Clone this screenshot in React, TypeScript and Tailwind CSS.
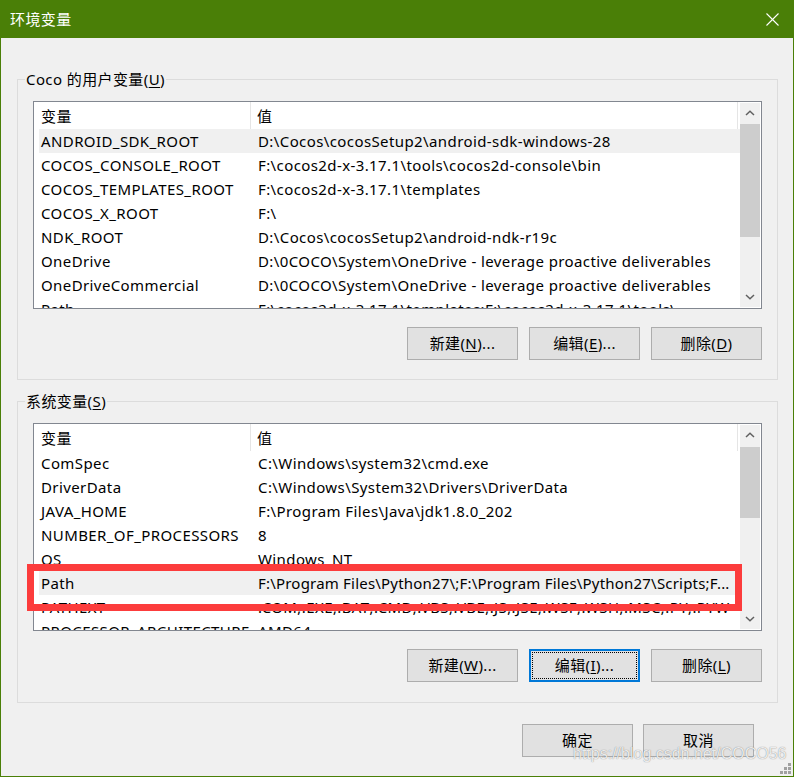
import React from "react";

type Row = [string, string, string?];

const userVars: Row[] = [
  ["ANDROID_SDK_ROOT", "D:\\Cocos\\cocosSetup2\\android-sdk-windows-28"],
  ["COCOS_CONSOLE_ROOT", "F:\\cocos2d-x-3.17.1\\tools\\cocos2d-console\\bin"],
  ["COCOS_TEMPLATES_ROOT", "F:\\cocos2d-x-3.17.1\\templates"],
  ["COCOS_X_ROOT", "F:\\"],
  ["NDK_ROOT", "D:\\Cocos\\cocosSetup2\\android-ndk-r19c"],
  ["OneDrive", "D:\\0COCO\\System\\OneDrive - leverage proactive deliverables"],
  ["OneDriveCommercial", "D:\\0COCO\\System\\OneDrive - leverage proactive deliverables"],
  ["Path", "F:\\cocos2d-x-3.17.1\\templates;F:\\cocos2d-x-3.17.1\\tools\\..."],
];

const sysVars: Row[] = [
  ["ComSpec", "C:\\Windows\\system32\\cmd.exe"],
  ["DriverData", "C:\\Windows\\System32\\Drivers\\DriverData"],
  ["JAVA_HOME", "F:\\Program Files\\Java\\jdk1.8.0_202"],
  ["NUMBER_OF_PROCESSORS", "8"],
  ["OS", "Windows_NT"],
  ["Path", "F:\\Program Files\\Python27\\;F:\\Program Files\\Python27\\Scripts;F...", "tracking-[0.2px]"],
  ["PATHEXT", ".COM;.EXE;.BAT;.CMD;.VBS;.VBE;.JS;.JSE;.WSF;.WSH;.MSC;.PY;.PYW"],
  ["PROCESSOR_ARCHITECTURE", "AMD64"],
];

function ChevronUp() {
  return (
    <svg width="10" height="6" viewBox="0 0 10 6">
      <polyline points="1,5 5,1.3 9,5" fill="none" stroke="#606060" strokeWidth="1.5" />
    </svg>
  );
}

function ChevronDown() {
  return (
    <svg width="10" height="6" viewBox="0 0 10 6">
      <polyline points="1,1 5,4.7 9,1" fill="none" stroke="#606060" strokeWidth="1.5" />
    </svg>
  );
}

function ListBox({ rows, selected, thumbClass }: { rows: Row[]; selected: number; thumbClass: string }) {
  return (
    <div className="h-[208px] border border-[#828790] bg-white flex overflow-hidden">
      <div className="flex-1 pl-[5px] flex flex-col overflow-hidden">
        <div className="h-[27px] flex shrink-0">
          <div className="w-[212px] shrink-0 border-r border-[#e5e5e5] pl-[2px] flex items-center pt-[2px]">变量</div>
          <div className="w-[487px] shrink-0 border-r border-[#e5e5e5] pl-[6px] flex items-center pt-[2px]">值</div>
        </div>
        {rows.map((r, i) => (
          <div
            key={r[0]}
            className={
              "h-[24px] shrink-0 flex items-center whitespace-nowrap " + (i === selected ? "bg-[#f0f0f0]" : "")
            }
          >
            <div className="w-[212px] shrink-0 pl-[2px] overflow-hidden">{r[0]}</div>
            <div className={"flex-1 min-w-0 pl-[7px] overflow-hidden " + (r[2] ?? "")}>{r[1]}</div>
          </div>
        ))}
      </div>
      <div className="w-[20px] shrink-0 my-[1px] mr-[1px] bg-[#f0f0f0] flex flex-col">
        <div className="h-[20px] shrink-0 flex items-center justify-center">
          <ChevronUp />
        </div>
        <div className="flex-1">
          <div className={"bg-[#cdcdcd] " + thumbClass} />
        </div>
        <div className="h-[20px] shrink-0 flex items-center justify-center">
          <ChevronDown />
        </div>
      </div>
    </div>
  );
}

function Btn({ label, mn, tail, focused }: { label: string; mn?: string; tail?: string; focused?: boolean }) {
  return (
    <div
      className={
        "relative w-[111px] h-[33px] shrink-0 bg-[#e1e1e1] flex items-center justify-center " +
        (focused ? "border-2 border-[#0078d7]" : "border border-[#adadad]")
      }
    >
      {focused && <div className="absolute inset-[1px] border border-dotted border-[#000]" />}
      <span className="relative">
        {label}
        {mn !== undefined && (
          <>
            (<span className="underline underline-offset-2">{mn}</span>){tail}
          </>
        )}
      </span>
    </div>
  );
}

function Group({ title, mn, children, pb }: { title: string; mn: string; children: React.ReactNode; pb: string }) {
  return (
    <div className={"relative w-[761px] border border-[#dcdcdc] pl-[15px] pr-[15px] pt-[21px] " + pb}>
      <div className="absolute -top-[11px] left-[7px] px-[1px] leading-[20px] bg-[#f0f0f0] whitespace-nowrap">
        {title}(<span className="underline underline-offset-2">{mn}</span>)
      </div>
      {children}
    </div>
  );
}

export default function App() {
  return (
    <div className="relative w-[794px] h-[777px] flex flex-col bg-[#f0f0f0] text-[15px] tracking-[0.4px] text-black font-['Noto_Sans','Noto_Sans_CJK_SC',sans-serif] overflow-hidden">
      <div className="h-[38px] shrink-0 bg-[#4a7f07] flex items-center justify-between pl-[10px] pr-[15px] text-white">
        <span className="leading-[20px]">环境变量</span>
        <svg width="13" height="13" viewBox="0 0 13 13">
          <line x1="0.5" y1="0.5" x2="12.5" y2="12.5" stroke="#fff" strokeWidth="1.1" />
          <line x1="12.5" y1="0.5" x2="0.5" y2="12.5" stroke="#fff" strokeWidth="1.1" />
        </svg>
      </div>
      <div className="flex-1 border-x border-b border-[#4a7f07] pl-[16px] flex flex-col">
        <div className="mt-[41px]">
          <Group title="Coco 的用户变量" mn="U" pb="pb-[19px]">
            <ListBox rows={userVars} selected={0} thumbClass="mt-[1px] h-[113px]" />
            <div className="mt-[18px] flex justify-end gap-[11px]">
              <Btn label="新建" mn="N" tail="..." />
              <Btn label="编辑" mn="E" tail="..." />
              <Btn label="删除" mn="D" />
            </div>
          </Group>
        </div>
        <div className="mt-[21px]">
          <Group title="系统变量" mn="S" pb="pb-[20px]">
            <ListBox rows={sysVars} selected={5} thumbClass="mt-[2px] h-[71px]" />
            <div className="mt-[18px] flex justify-end gap-[11px]">
              <Btn label="新建" mn="W" tail="..." />
              <Btn label="编辑" mn="I" tail="..." focused />
              <Btn label="删除" mn="L" />
            </div>
          </Group>
        </div>
        <div className="mt-[21px] w-[761px] flex justify-end gap-[10px] pr-[24px]">
          <Btn label="确定" />
          <Btn label="取消" />
        </div>
      </div>

      <div className="absolute left-[27px] top-[564px] w-[715px] h-[47px] border-[7px] border-[#fc3c3c]" />

      <div className="absolute left-[573px] top-[744px] text-[16px] leading-[20px] tracking-normal font-['Liberation_Sans',Arial,sans-serif] text-white/85 [text-shadow:0_0_1px_rgba(0,0,0,0.55)] whitespace-nowrap">
        https://blog.csdn.net/COCO56
      </div>

      <svg className="absolute right-[3px] bottom-[3px]" width="11" height="11" viewBox="0 0 11 11">
        <rect x="8" y="0" width="3" height="3" fill="#a0a0a0" />
        <rect x="4" y="4" width="3" height="3" fill="#a0a0a0" />
        <rect x="8" y="4" width="3" height="3" fill="#a0a0a0" />
        <rect x="0" y="8" width="3" height="3" fill="#a0a0a0" />
        <rect x="4" y="8" width="3" height="3" fill="#a0a0a0" />
        <rect x="8" y="8" width="3" height="3" fill="#a0a0a0" />
      </svg>
    </div>
  );
}
